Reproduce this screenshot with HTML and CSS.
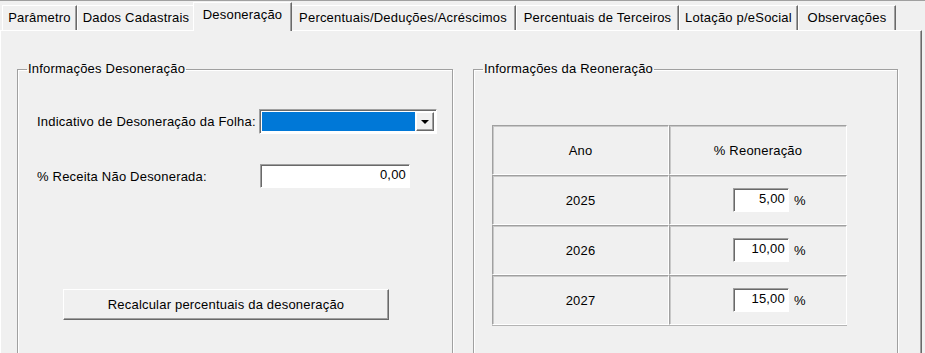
FILE: index.html
```html
<!DOCTYPE html>
<html lang="pt-BR">
<head>
  <meta charset="UTF-8" />
  <meta name="viewport" content="width=device-width, initial-scale=1.0"/>
  <title>Desoneração</title>
  <link rel="stylesheet" href="styles.css">
</head>
<body>

<div class="window">
  <div class="tabs">
    <div class="tab tab-param">Parâmetro</div>
    <div class="tab tab-dados">Dados Cadastrais</div>
    <div class="tab tab-deson active">Desoneração</div>
    <div class="tab tab-perc">Percentuais/Deduções/Acréscimos</div>
    <div class="tab tab-terc">Percentuais de Terceiros</div>
    <div class="tab tab-lot">Lotação p/eSocial</div>
    <div class="tab tab-obs">Observações</div>
  </div>

  <div class="page">
    <fieldset class="group group-deson">
      <legend>Informações Desoneração</legend>
      <div class="form">
        <div class="field-row">
          <label class="field-label">Indicativo de Desoneração da Folha:</label>
          <div class="combo">
            <span class="combo-value"></span>
            <span class="combo-btn"><span class="arrow-down"></span></span>
          </div>
        </div>
        <div class="field-row row-receita">
          <label class="field-label">% Receita Não Desonerada:</label>
          <div class="edit edit-wide">0,00</div>
        </div>
        <button class="btn">Recalcular percentuais da desoneração</button>
      </div>
    </fieldset>

    <fieldset class="group group-reon">
      <legend>Informações da Reoneração</legend>
      <div class="grid">
        <div class="cell">Ano</div>
        <div class="cell">% Reoneração</div>

        <div class="cell">2025</div>
        <div class="cell cell-value"><div class="edit edit-small">5,00</div><span>%</span></div>

        <div class="cell">2026</div>
        <div class="cell cell-value"><div class="edit edit-small">10,00</div><span>%</span></div>

        <div class="cell">2027</div>
        <div class="cell cell-value"><div class="edit edit-small">15,00</div><span>%</span></div>
      </div>
    </fieldset>
  </div>
</div>

</body>
</html>
```

FILE: styles.css
```css
* {
  box-sizing: border-box;
}

body {
  font-family: 'Liberation Sans', Arial, sans-serif;
  font-size: 13px;
  letter-spacing: 0.2px;
  margin: 0;
  background-color: #f0f0f0;
  color: #000;
  overflow: hidden;
}

.window {
  height: 353px;
  display: flex;
  flex-direction: column;
  border-top: 1px solid #a0a0a0;
  overflow: hidden;
}

/* tab strip */
.tabs {
  display: flex;
  align-items: flex-end;
  height: 29px;
  padding-left: 2px;
  position: relative;
  z-index: 1;
}

.tab {
  height: 25px;
  line-height: 23px;
  text-align: center;
  white-space: nowrap;
  border-top: 1px solid #fff;
  border-left: 1px solid #fff;
  border-right: 1px solid #696969;
  box-shadow: inset -1px 0 #a0a0a0;
}

.tab-param { width: 75px; }
.tab-dados { width: 118px; }
.tab-deson { width: 95px; }
.tab-perc  { width: 226px; }
.tab-terc  { width: 163px; }
.tab-lot   { width: 119px; }
.tab-obs   { width: 98px; }

.tab.active {
  width: 99px;
  height: 29px;
  line-height: 24px;
  margin: 0 -2px -1px;
  background-color: #f0f0f0;
  position: relative;
}

/* page */
.page {
  flex: 1;
  min-height: 0;
  overflow: hidden;
  display: flex;
  gap: 20px;
  margin-right: 3px;
  padding: 31px 0 0 16px;
  border-top: 1px solid #fff;
  border-left: 1px solid #fff;
  border-right: 1px solid #696969;
  box-shadow: inset -1px 0 #a0a0a0;
}

.group {
  margin: 0;
  padding: 0;
  min-width: 0;
  height: 300px;
  flex-shrink: 0;
  border: 1px solid #a0a0a0;
  box-shadow: inset 1px 1px #fff, 1px 1px #fff;
}

.group legend {
  margin-left: 9px;
  padding: 0 1px;
  line-height: 14px;
}

.group-deson {
  width: 436px;
}

.group-reon {
  width: 425px;
}

/* left form */
.form {
  display: flex;
  flex-direction: column;
  align-items: flex-start;
  padding: 33px 0 0 19px;
}

.field-row {
  display: flex;
  align-items: center;
}

.row-receita {
  margin-top: 30px;
}

.field-label {
  width: 222px;
  white-space: nowrap;
}

.combo {
  display: flex;
  width: 178px;
  height: 25px;
  padding: 2px;
  background-color: #fff;
  border: 1px solid;
  border-color: #a0a0a0 #fff #fff #a0a0a0;
  box-shadow: inset 1px 1px #696969;
}

.combo-value {
  flex: 1;
  background-color: #0078d7;
}

.combo-btn {
  width: 18px;
  margin-left: 1px;
  display: flex;
  align-items: center;
  justify-content: center;
  background-color: #f0f0f0;
  border: 1px solid;
  border-color: #fff #696969 #696969 #fff;
  box-shadow: inset -1px -1px #a0a0a0;
}

.arrow-down {
  width: 0;
  height: 0;
  border-left: 4px solid transparent;
  border-right: 4px solid transparent;
  border-top: 4px solid #000;
}

.edit {
  height: 24px;
  line-height: 20px;
  padding: 0 3px 0 4px;
  text-align: right;
  background-color: #fff;
  border: 1px solid;
  border-color: #a0a0a0 #fff #fff #a0a0a0;
  box-shadow: inset 1px 1px #696969;
}

.edit-wide {
  width: 150px;
  margin-left: 1px;
}

.edit-small {
  width: 56px;
}

.btn {
  margin: 101px 0 0 26px;
  width: 326px;
  height: 31px;
  font-family: inherit;
  font-size: 13px;
  letter-spacing: 0.2px;
  color: #000;
  background-color: #f0f0f0;
  border: 1px solid;
  border-color: #fff #696969 #696969 #fff;
  box-shadow: inset -1px -1px #a0a0a0;
  padding: 0;
}

/* reoneration table */
.grid {
  display: grid;
  grid-template-columns: 177px 178px;
  grid-auto-rows: 50px;
  width: 355px;
  margin: 49px 0 0 18px;
  border-bottom: 1px solid #b4b4b4;
}

.cell {
  display: flex;
  align-items: center;
  justify-content: center;
  border: 1px solid;
  border-color: #a0a0a0 #fff #fff #a0a0a0;
  box-shadow: inset 1px 1px #c8c8c8;
}

.cell-value {
  justify-content: flex-start;
  padding-left: 63px;
  gap: 5px;
}
```
